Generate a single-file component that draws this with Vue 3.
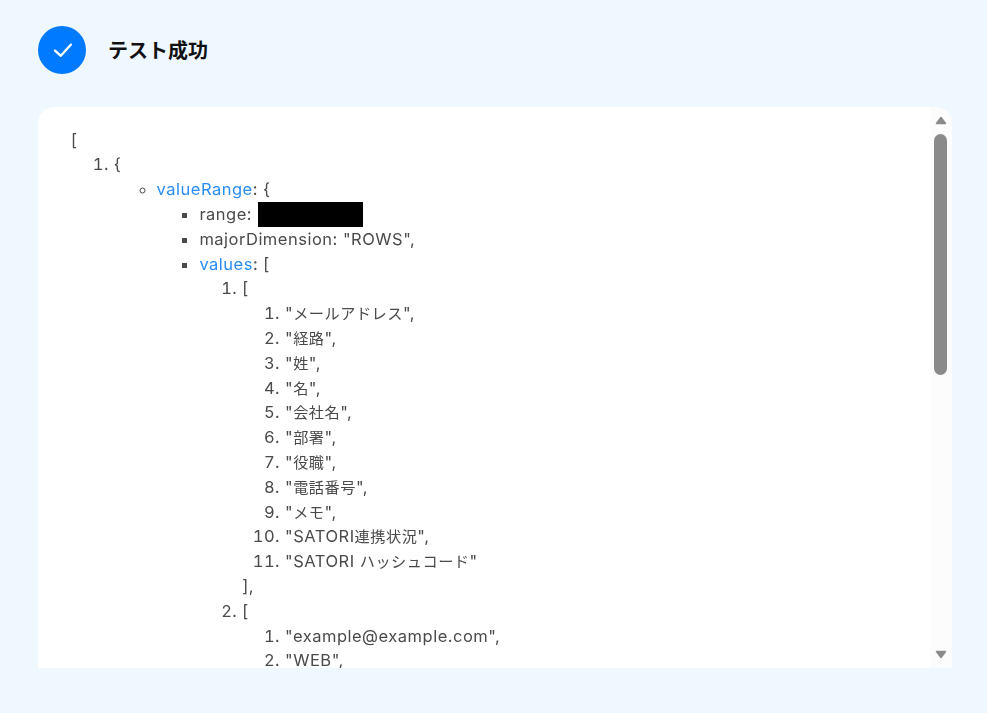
<script setup>
const headers = [
  ['"', 'メールアドレス', '",'], ['"', '経路', '",'], ['"', '姓', '",'], ['"', '名', '",'],
  ['"', '会社名', '",'], ['"', '部署', '",'], ['"', '役職', '",'], ['"', '電話番号', '",'],
  ['"', 'メモ', '",'], ['"SATORI', '連携状況', '",'], ['"SATORI ', 'ハッシュコード', '"']
]
const rows = ['"example@example.com",', '"WEB",']
</script>

<template>
  <main class="page">
    <header class="head">
      <span class="badge">
        <svg width="24" height="24" viewBox="0 0 24 24" fill="none">
          <path d="M5 12.6 10.8 17.8 21 6.6" stroke="#fff" stroke-width="2.3" stroke-linecap="round" stroke-linejoin="round" />
        </svg>
      </span>
      <h1 class="title">テスト成功</h1>
    </header>

    <section class="card">
      <div class="content">
        <div>[</div>
        <ol class="list">
          <li>
            {
            <ul class="list circle">
              <li>
                <span class="key">valueRange</span>: {
                <ul class="list square">
                  <li>range: <span class="mask"></span></li>
                  <li>majorDimension: "ROWS",</li>
                  <li>
                    <span class="key">values</span>: [
                    <ol class="list">
                      <li>
                        [
                        <ol class="list">
                          <li v-for="h in headers" :key="h[1]">{{ h[0] }}<span class="ja">{{ h[1] }}</span>{{ h[2] }}</li>
                        </ol>
                        ],
                      </li>
                      <li>
                        [
                        <ol class="list">
                          <li v-for="r in rows" :key="r">{{ r }}</li>
                        </ol>
                      </li>
                    </ol>
                  </li>
                </ul>
              </li>
            </ul>
          </li>
        </ol>
      </div>
      <aside class="track">
        <svg class="arrow" width="12" height="9" viewBox="0 0 12 9"><path d="M6 1.5 10.5 7.5H1.5Z" fill="#8a8a8a" stroke="#8a8a8a" stroke-width="1.5" stroke-linejoin="round" /></svg>
        <span class="thumb"></span>
        <span class="spacer"></span>
        <svg class="arrow" width="12" height="9" viewBox="0 0 12 9"><path d="M6 7.5 10.5 1.5H1.5Z" fill="#8a8a8a" stroke="#8a8a8a" stroke-width="1.5" stroke-linejoin="round" /></svg>
      </aside>
    </section>
  </main>
</template>

<style>
html, body { margin: 0; }
</style>

<style scoped>
.page {
  box-sizing: border-box;
  width: 987px;
  height: 713px;
  padding: 26px 35px 45px 38px;
  background: #eff7ff;
  display: flex;
  flex-direction: column;
  gap: 33px;
  overflow: hidden;
  font-family: Inter, "Noto Sans CJK JP", sans-serif;
}
.head {
  display: flex;
  align-items: center;
  gap: 22px;
  height: 48px;
  flex: none;
}
.badge {
  width: 48px;
  height: 48px;
  border-radius: 50%;
  background: #007aff;
  display: flex;
  align-items: center;
  justify-content: center;
}
.title {
  margin: 0 0 2px;
  font-size: 20px;
  font-weight: 700;
  color: #111;
}
.card {
  flex: 1;
  min-height: 0;
  display: flex;
  background: #fff;
  border-radius: 16px 16px 0 0;
  overflow: hidden;
}
.content {
  flex: 1;
  min-width: 0;
  overflow: hidden;
  padding: 20.5px 33px 0;
  font-size: 16.5px;
  line-height: 24.8px;
  letter-spacing: 0.5px;
  color: #4a4a4a;
  will-change: opacity;
}
.ja {
  font-size: 15.2px;
  line-height: 0;
}
.list {
  margin: 0;
  padding: 0 0 0 42.8px;
}
.circle { list-style-type: circle; }
.square { list-style-type: square; }
.key { color: #2a8cf2; }
.mask {
  display: inline-block;
  width: 105px;
  height: 25px;
  margin-left: 1px;
  background: #000;
  vertical-align: top;
}
.track {
  flex: none;
  width: 22px;
  background: #fcfcfc;
  display: flex;
  flex-direction: column;
  align-items: center;
  padding: 9px 0;
  box-sizing: border-box;
}
.thumb {
  width: 13px;
  height: 241px;
  margin: 9px 1px 0 0;
  border-radius: 7px;
  background: #8a8a8a;
}
.spacer { flex: 1; }
.arrow { flex: none; }
</style>
